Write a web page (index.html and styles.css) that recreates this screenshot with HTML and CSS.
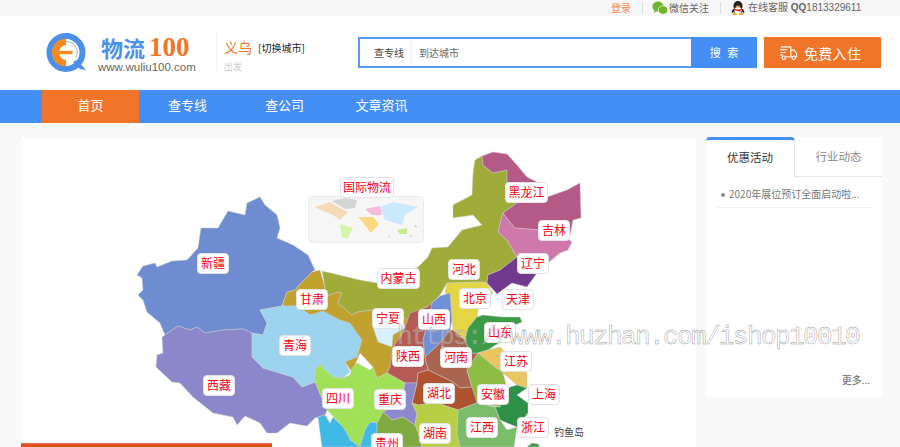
FILE: index.html
```html
<!DOCTYPE html>
<html lang="zh">
<head>
<meta charset="utf-8">
<title>物流100</title>
<link rel="stylesheet" href="styles.css">
</head>
<body>
<div class="topbar">
  <a class="login">登录</a>
  <span class="topsep"></span>
  <svg class="wx" viewBox="0 0 16 14"><ellipse cx="6" cy="5.500" rx="5.600" ry="5" fill="#6fb52c"/><path d="M2.500 9l-.5 3 3-2z" fill="#6fb52c"/><ellipse cx="11" cy="9" rx="4.800" ry="4.200" fill="#6fb52c" stroke="#f7f7f7" stroke-width=".7"/></svg>
  <span class="tt wxt">微信关注</span>
  <span class="topsep"></span>
  <svg class="qq" viewBox="0 0 14 14"><ellipse cx="7" cy="5" rx="4.600" ry="5" fill="#222"/><path d="M2 8q-2 3-1 4l2-1 1 1h6l1-1 2 1q1-1-1-4z" fill="#222"/><ellipse cx="7" cy="9.500" rx="3.600" ry="3.400" fill="#fff"/><path d="M3 7.500q4 1.800 8 0l.4 1.200-2 .8v2l-1.600-1.400q-2 .4-4.800-1.400z" fill="#d8261c"/><ellipse cx="3.800" cy="13" rx="2.600" ry="1" fill="#f0a81e"/><ellipse cx="10.200" cy="13" rx="2.600" ry="1" fill="#f0a81e"/><ellipse cx="7" cy="5.600" rx="2" ry="1" fill="#f0a81e"/></svg>
  <span class="tt qqt">在线客服 <b>QQ</b>1813329611</span>
</div>

<header class="head">
  <svg class="logo" viewBox="0 0 42 42">
    <circle cx="20" cy="19.500" r="16.500" fill="none" stroke="#4a90e8" stroke-width="6"/>
    <path d="M20 5.500a14 14 0 0 0 0 28z" fill="#f58a1f"/>
    <circle cx="20.500" cy="19.500" r="7.500" fill="#fff"/>
    <rect x="12.500" y="17.800" width="14" height="3.400" fill="#f58a1f"/>
    <path d="M20 8.500a11 11 0 0 1 10 16" fill="none" stroke="#9cc4f2" stroke-width="1.200"/>
    <path d="M27 29l7 7 6 1-9-10z" fill="#4a90e8"/>
  </svg>
  <div class="brand">
    <div class="bname"><span class="bcn">物流</span><span class="bnum">100</span></div>
    <div class="burl">www.wuliu100.com</div>
  </div>
  <div class="city">
    <div class="cityrow"><span class="cname">义乌</span><span class="cswitch">[切换城市]</span></div>
    <div class="cfrom">出发</div>
  </div>
  <form class="search">
    <span class="stype">查专线</span>
    <span class="sinput">到达城市</span>
    <span class="sbtn">搜 索</span>
  </form>
  <a class="join">
    <svg class="truck" viewBox="0 0 20 16" fill="none" stroke="#fff" stroke-width="1.200"><path d="M2 1.500h10.500v10.500h-5M12.500 5h3.500l2.500 3.500v3.500h-1M12.500 12h1.500M1 4.500h7M2 7.500h5M1 10h3"/><circle cx="5" cy="13" r="1.800"/><circle cx="15.500" cy="13" r="1.800"/></svg>
    <span>免费入住</span>
  </a>
</header>

<nav class="nav">
  <a class="navi on">首页</a>
  <a class="navi">查专线</a>
  <a class="navi">查公司</a>
  <a class="navi">文章资讯</a>
</nav>

<main class="main">
  <section class="panel">
    <div class="canvas">
      <svg class="map" viewBox="21 138 675 309" width="675" height="309">
        <rect class="wmbox" x="308.500" y="196.500" width="115" height="46" rx="4"/>
        <g class="wm">
          <path d="M315 207l15-5 12 7 6 3-8 8-7-5-10-4z" fill="#f5dab8"/>
          <path d="M332 201l13-3 12 2-2 8-10 1z" fill="#d4d4d4"/>
          <path d="M340 224l13 4-6 11-5-2z" fill="#d3f5a6"/>
          <path d="M358 217h15l6 7-7 8h-2l-5-7z" fill="#fbd983"/>
          <path d="M365 209l15-3 2 9h-10z" fill="#f7bcdc"/>
          <path d="M380 207l13-5 25 5-13 8-3 10-10-3-7-2z" fill="#cbe9fd"/>
          <path d="M397 230l10-2v6h-7z" fill="#c6eb8d"/>
          <path d="M409 236l3-1v2zM414 226l2-1 1 3zM388 236l2 0v2z" fill="#ccc"/>
        </g>
        <g class="prov">
          <polygon fill="#6e8ccf" points="137,275 143,266 155,263 157,267 172,261 187,260 198,248 201,228 218,228 228,211 245,215 247,203 260,197 265,205 277,215 280,228 277,238 293,245 308,255 315,270 312,272 302,282 295,290 287,292 283,303 282,306 260,310 267,323 263,335 252,333 243,329 223,330 205,333 197,327 190,330 178,326 165,335 160,323 147,312 143,300 138,295 143,290 142,278"/>
          <polygon fill="#8b87ca" points="162,337 165,335 178,326 190,330 197,327 205,333 223,330 243,329 252,333 252,357 263,368 293,377 302,387 315,382 327,410 325,415 315,418 307,426 290,423 277,433 267,433 260,423 245,416 237,425 233,417 213,413 193,397 180,383 172,382 156,367 157,355 163,353"/>
          <polygon fill="#c2a22f" points="283,306 283,303 287,292 295,290 302,282 312,272 320,270 325,287 326,296 338,292 342,293 338,303 352,315 357,312 370,310 400,313 410,320 400,340 393,350 390,367 387,373 377,378 373,367 360,353 352,372 345,362 340,330 310,315 297,306"/>
          <polygon fill="#9cd3ef" points="260,310 282,306 297,306 310,315 323,311 340,320 350,323 362,340 357,357 345,362 350,372 343,378 333,377 325,370 320,364 315,370 315,382 302,387 293,377 263,368 252,357 252,333 263,335 267,323"/>
          <polygon fill="#a0ac3a" points="322,271 360,280 377,283 395,275 418,267 428,257 432,248 448,247 462,230 482,225 473,215 453,218 453,205 472,195 473,173 475,160 482,156 483,165 493,173 507,170 507,183 517,203 503,213 498,232 507,240 517,257 500,270 488,275 487,283 482,282 447,283 440,295 430,305 420,310 407,320 400,313 370,310 357,312 352,315 338,303 342,293 338,292 326,296 325,287"/>
          <polygon fill="#b55a87" points="482,156 493,152 507,154 517,165 527,177 547,187 547,197 567,190 580,183 581,218 573,220 570,235 553,227 540,230 515,228 508,220 503,213 517,203 507,183 507,170 493,173 483,165"/>
          <polygon fill="#cf78ab" points="498,232 503,213 508,220 515,228 540,230 553,227 572,242 568,250 560,253 548,263 533,255 517,257 507,240"/>
          <polygon fill="#723a8e" points="517,257 533,255 548,263 548,265 537,273 527,287 512,283 497,294 487,283 488,275 500,270"/>
          <polygon fill="#e4d545" points="447,283 482,282 487,283 493,293 485,303 478,310 477,317 468,328 465,340 453,330 452,320 450,300 445,292"/>
          <polygon fill="#6f8fd6" points="440,296 450,293 452,320 450,330 440,343 425,357 423,340 432,303"/>
          <polygon fill="#b55a54" points="410,313 427,307 432,303 423,340 425,357 428,370 418,373 417,383 405,383 387,373 390,367 393,347 403,333"/>
          <polygon fill="#d8effc" points="373,327 403,320 405,328 393,335 392,347 378,342"/>
          <polygon fill="#a9654f" points="425,357 440,343 450,330 453,330 465,340 470,353 478,353 475,358 467,370 472,387 460,388 453,382 428,370"/>
          <polygon fill="#3d9b47" points="465,340 468,328 477,317 483,315 502,317 520,317 522,322 510,327 503,340 488,350 478,353 470,353"/>
          <polygon fill="#ecc563" points="478,353 488,350 500,347 527,373 527,388 517,385 503,373 490,363"/>
          <polygon fill="#8dbd45" points="475,358 478,353 490,363 503,373 507,388 500,407 475,403 472,387 467,370"/>
          <polygon fill="#2f9147" points="507,388 517,385 527,388 517,395 528,403 528,413 517,427 500,420 495,407 500,407"/>
          <polygon fill="#ae5230" points="428,370 453,382 460,388 472,387 477,403 458,410 437,403 418,405 412,403 417,383 418,373"/>
          <polygon fill="#a0e157" points="315,370 320,364 325,370 333,377 343,378 350,375 352,368 357,363 370,370 373,367 377,378 387,373 405,383 402,403 383,412 377,423 370,422 365,430 360,447 350,440 347,433 343,427 330,413 327,410 315,382"/>
          <polygon fill="#8d87cc" points="405,383 417,383 412,403 417,413 415,425 403,417 392,420 383,412 402,403"/>
          <polygon fill="#3fb9e6" points="318,417 325,415 330,423 333,417 343,427 347,433 350,440 360,447 322,447"/>
          <polygon fill="#3fb9e6" points="370,422 377,423 377,447 360,447 365,430"/>
          <polygon fill="#7faa41" points="377,423 383,412 392,420 403,417 415,425 418,432 422,447 377,447"/>
          <polygon fill="#b8ce45" points="418,405 437,403 458,410 457,433 460,447 422,447 418,432 415,425 417,413 412,403"/>
          <polygon fill="#7abc69" points="458,410 477,403 495,407 500,420 507,430 517,427 514,447 460,447 457,433"/>
          <polygon fill="#3d9b47" points="527,447 532,443 538,444 540,447"/>
          <polygon fill="#e8d67a" points="545,431 549,431 549,433 545,433"/>
        </g>
      </svg>
      <a class="lb lb4 p-gj">国际物流</a>
      <a class="lb p-xj">新疆</a>
      <a class="lb p-gs">甘肃</a>
      <a class="lb p-qh">青海</a>
      <a class="lb p-xz">西藏</a>
      <a class="lb p-sc">四川</a>
      <a class="lb lb3 p-hlj">黑龙江</a>
      <a class="lb p-jl">吉林</a>
      <a class="lb p-ln">辽宁</a>
      <a class="lb p-heb">河北</a>
      <a class="lb lb3 p-nmg">内蒙古</a>
      <a class="lb p-bj">北京</a>
      <a class="lb p-tj">天津</a>
      <a class="lb p-nx">宁夏</a>
      <a class="lb p-sx">山西</a>
      <a class="lb p-sd">山东</a>
      <a class="lb p-sax">陕西</a>
      <a class="lb p-hen">河南</a>
      <a class="lb p-js">江苏</a>
      <a class="lb p-hub">湖北</a>
      <a class="lb p-ah">安徽</a>
      <a class="lb p-sh">上海</a>
      <a class="lb p-cq">重庆</a>
      <a class="lb p-zj">浙江</a>
      <a class="lb p-jx">江西</a>
      <a class="lb p-hun">湖南</a>
      <a class="lb p-gz">贵州</a>
      <span class="isle">钓鱼岛</span>
    </div>
    <div class="banner"></div>
  </section>

  <aside class="side">
    <div class="tabs">
      <span class="tab active">优惠活动</span>
      <span class="tab">行业动态</span>
    </div>
    <ul class="news">
      <li>2020年展位预订全面启动啦...</li>
    </ul>
    <a class="more">更多...</a>
  </aside>
</main>

<div class="mark">https://www.huzhan.com/ishop10010</div>
</body>
</html>
```
FILE: styles.css
```css
* { box-sizing: border-box; }
html, body { margin: 0; padding: 0; height: 447px; overflow: hidden; }
body {
  position: relative;
  background: #f9f9f9;
  font-family: "Noto Sans CJK SC", "Liberation Sans", sans-serif;
  font-size: 12px;
  color: #666;
}
a { text-decoration: none; color: inherit; }

.topbar {
  height: 16px;
  background: #f7f7f7;
  display: flex;
  align-items: center;
  padding-left: 611px;
  font-size: 10px;
  line-height: 12px;
  color: #666;
}
.login { font-size: 10px; color: #f58a4a; width: 20px; white-space: nowrap; }
.topsep { width: 1px; height: 12px; background: #ddd; margin: 0 9px 0 11px; }
.wx { width: 16px; height: 14px; flex: none; }
.tt { white-space: nowrap; }
.wxt { margin-left: 1px; width: 40px; }
.qq { width: 14px; height: 14px; flex: none; margin-left: 1px; }
.qqt { margin-left: 3px; font-family: "Liberation Sans", "Noto Sans CJK SC", sans-serif; }

.head {
  height: 74px;
  background: #fff;
  display: flex;
  align-items: flex-start;
  padding-left: 46px;
}
.logo { width: 42px; height: 42px; margin-top: 17px; flex: none; }
.brand { margin: 17px 0 0 10px; width: 118px; flex: none; }
.bname { height: 28px; line-height: 28px; display: flex; padding-left: 3px; white-space: nowrap; }
.bcn { font-family: "Noto Sans CJK SC", sans-serif; font-weight: 700; font-size: 22px; color: #4a90e8; }
.bnum { font-family: "Liberation Serif", serif; font-weight: 700; font-size: 27px; color: #f27428; margin-left: 4px; }
.burl { font-family: "Liberation Sans", sans-serif; font-size: 11.5px; line-height: 14px; color: #666; margin-top: -1px; white-space: nowrap; }
.city { margin-top: 17px; height: 37px; border-left: 1px solid #f2f2f2; padding-left: 7px; width: 142px; flex: none; }
.cityrow { display: flex; align-items: center; height: 28px; }
.cname { font-size: 14px; color: #f27428; width: 34px; }
.cswitch { font-size: 10px; color: #222; white-space: nowrap; }
.cfrom { font-size: 9px; line-height: 10px; margin-top: 1px; color: #ccc; }
.search {
  margin-top: 21px;
  width: 399px;
  height: 31px;
  border: 2px solid #5a9bf2;
  display: flex;
  align-items: center;
  flex: none;
  background: #fff;
}
.stype { width: 52px; height: 27px; line-height: 27px; text-align: right; padding-right: 7px; font-size: 10px; color: #444; border-right: 1px solid #f0f0f0; flex: none; }
.sinput { flex: 1; padding-left: 7px; font-size: 10px; color: #666; }
.sbtn { width: 66px; height: 31px; line-height: 31px; margin-right: -2px; background: #448ff5; color: #fff; text-align: center; font-size: 11px; word-spacing: 4px; flex: none; }
.join {
  margin: 21px 0 0 7px;
  width: 117px;
  height: 31px;
  background: #f27428;
  color: #fff;
  display: flex;
  align-items: center;
  padding-left: 15px;
  font-size: 14px;
  letter-spacing: .3px;
  flex: none;
}
.truck { width: 19px; height: 16px; margin-right: 6px; flex: none; }

.nav {
  height: 33px;
  background: #448ff5;
  padding-left: 42px;
  display: flex;
}
.navi { width: 97px; line-height: 30px; text-align: center; font-size: 13px; color: #fff; }
.navi.on { background: #f27428; }

.main { display: flex; align-items: flex-start; padding: 14px 0 0 21px; gap: 10px; }
.panel { width: 675px; background: #fff; flex: none; margin-top: 1px; }
.canvas { position: relative; height: 305px; }
.map { position: absolute; left: 0; top: 0; display: block; overflow: hidden; }
.wmbox { fill: #f6f6f6; stroke: #ececec; }
.wm { filter: blur(.6px); }
.prov { filter: blur(.45px); }
.prov polygon { stroke: #c8c8c8; stroke-width: .5; stroke-linejoin: round; }
.banner { width: 251px; height: 4px; background: #e04e22; border-top: 1px solid #e6704e; }

.lb {
  position: absolute;
  width: 32px;
  height: 21px;
  background: #fff;
  border: 1px solid #e2e2e2;
  border-radius: 4px;
  color: #f5000f;
  font-size: 12px;
  line-height: 18px;
  text-align: center;
  white-space: nowrap;
}
.lb3 { width: 43px; }
.lb4 { width: 54px; }
.p-gj { left: 319px; top: 39px; }
.p-xj { left: 176px; top: 115px; }
.p-gs { left: 275px; top: 151px; }
.p-qh { left: 258px; top: 197px; }
.p-xz { left: 182px; top: 237px; }
.p-sc { left: 301px; top: 250px; }
.p-hlj { left: 484px; top: 44px; }
.p-jl { left: 517px; top: 82px; }
.p-ln { left: 496px; top: 115px; }
.p-heb { left: 427px; top: 121px; }
.p-nmg { left: 356px; top: 130px; }
.p-bj { left: 438px; top: 150px; }
.p-tj { left: 481px; top: 151px; }
.p-nx { left: 351px; top: 170px; }
.p-sx { left: 397px; top: 171px; }
.p-sd { left: 463px; top: 184px; }
.p-sax { left: 371px; top: 208px; }
.p-hen { left: 419px; top: 209px; }
.p-js { left: 479px; top: 213px; }
.p-hub { left: 402px; top: 245px; }
.p-ah { left: 456px; top: 246px; }
.p-sh { left: 507px; top: 246px; }
.p-cq { left: 353px; top: 251px; }
.p-zj { left: 496px; top: 279px; }
.p-jx { left: 445px; top: 279px; }
.p-hun { left: 398px; top: 285px; }
.p-gz { left: 350px; top: 295px; }
.isle { position: absolute; left: 533px; top: 287px; font-size: 10px; line-height: 14px; color: #444; white-space: nowrap; }

.side {
  width: 176px;
  height: 260px;
  background: #fff;
  flex: none;
  position: relative;
  display: flex;
  flex-direction: column;
}
.tabs { display: flex; height: 40px; flex: none; }
.tab {
  flex: 1;
  text-align: center;
  line-height: 38px;
  font-size: 11.500px;
  color: #888;
  border-bottom: 1px solid #e6e6e6;
}
.tab.active {
  flex: none;
  width: 89px;
  color: #333;
  border-top: 3px solid #448ff5;
  border-right: 1px solid #e6e6e6;
  border-bottom: 0;
  border-radius: 4px 4px 0 0;
  line-height: 35px;
}
.news { list-style: none; margin: 0; padding: 7px 11px 0 10px; }
.news li {
  height: 24px;
  line-height: 20px;
  font-size: 10px;
  color: #777;
  border-bottom: 1px dotted #e2e2e2;
  padding-left: 13px;
  position: relative;
  white-space: nowrap;
}
.news li::before {
  content: "";
  position: absolute;
  left: 5px;
  top: 9px;
  width: 4px;
  height: 4px;
  border-radius: 50%;
  background: #888;
}
.more { margin-top: auto; align-self: flex-end; padding: 0 12px 10px 0; font-size: 10px; line-height: 14px; color: #666; }

.mark {
  position: absolute;
  left: 397px;
  top: 320px;
  font-family: "Liberation Mono", monospace;
  font-size: 26px;
  line-height: 34px;
  letter-spacing: -1.6px;
  white-space: nowrap;
  color: rgba(255, 255, 255, .25);
  -webkit-text-stroke: .45px #999;
  pointer-events: none;
}
```
